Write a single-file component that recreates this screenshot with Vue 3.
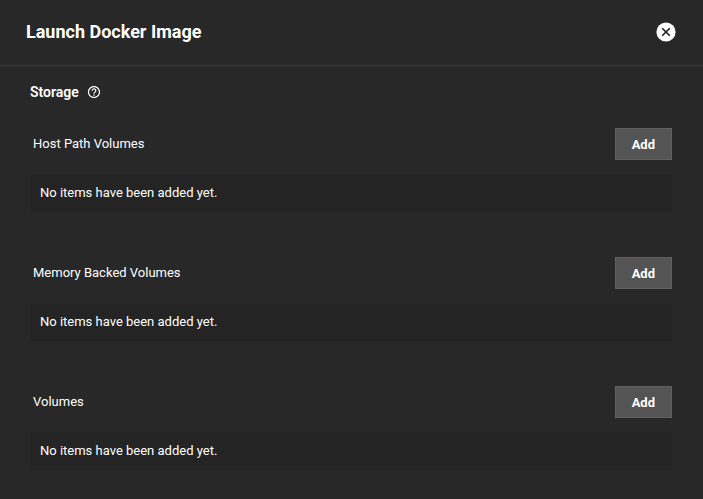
<script setup>
import { ref } from 'vue'

const groups = ref([
  { id: 'host-path', label: 'Host Path Volumes' },
  { id: 'memory-backed', label: 'Memory Backed Volumes' },
  { id: 'volumes', label: 'Volumes' },
])
</script>

<template>
  <main class="panel">
    <header class="panel-header">
      <h1 class="title">Launch Docker Image</h1>
      <button class="icon-button" type="button" aria-label="Close">
        <svg width="20" height="20" viewBox="0 0 20 20" aria-hidden="true">
          <circle cx="10" cy="10" r="9.6" fill="#fff" />
          <path d="M6.200 6.200L13.800 13.800M13.800 6.200L6.200 13.800" stroke="#202020" stroke-width="1.6" fill="none" />
        </svg>
      </button>
    </header>

    <section class="storage">
      <div class="storage-heading">
        <h2 class="heading">Storage</h2>
        <button class="icon-button" type="button" aria-label="Storage help">
          <svg width="14" height="14" viewBox="0.500 0.500 23 23" fill="#fff" aria-hidden="true">
            <path d="M11 18h2v-2h-2v2zm1-16C6.48 2 2 6.48 2 12s4.480 10 10 10 10-4.480 10-10S17.520 2 12 2zm0 18c-4.410 0-8-3.590-8-8s3.590-8 8-8 8 3.590 8 8-3.590 8-8 8zm0-14c-2.210 0-4 1.790-4 4h2c0-1.100.900-2 2-2s2 .900 2 2c0 2-3 1.750-3 5h2c0-2.250 3-2.500 3-5 0-2.210-1.790-4-4-4z" />
          </svg>
        </button>
      </div>

      <div class="groups">
        <section v-for="group in groups" :key="group.id" class="group">
          <div class="group-header">
            <h3 :id="group.id" class="group-label">{{ group.label }}</h3>
            <button class="add" type="button" :aria-describedby="group.id">Add</button>
          </div>
          <p class="empty">No items have been added yet.</p>
        </section>
      </div>
    </section>
  </main>
</template>

<style>
body {
  margin: 0;
  background: #282828;
}
</style>

<style scoped>
.panel {
  color: #fff;
  font-family: Roboto, "Liberation Sans", sans-serif;
  font-size: 13px;
}

.panel-header {
  display: flex;
  align-items: center;
  justify-content: space-between;
  padding: 16px 27px 17px 26px;
  border-bottom: 1px solid #3c3c3c;
}

.title {
  margin: 0;
  font-size: 18px;
  font-weight: 700;
  line-height: 32px;
}

.icon-button {
  display: flex;
  padding: 0;
  border: 0;
  background: none;
  cursor: pointer;
}

.storage {
  padding: 16px 31px 28px 30px;
}

.storage-heading {
  display: flex;
  align-items: center;
  gap: 8px;
}

.heading {
  margin: 0;
  font-size: 14px;
  font-weight: 600;
  line-height: 20px;
}

.groups {
  display: grid;
  gap: 45px;
  margin-top: 26px;
}

.group-header {
  display: flex;
  align-items: center;
  justify-content: space-between;
  padding-left: 3px;
}

.group-label {
  margin: 0;
  font-size: 13px;
  font-weight: 400;
  line-height: 30px;
}

.add {
  box-sizing: border-box;
  height: 32px;
  padding: 2px 16px 0;
  border: 1px solid #606060;
  background: #545454;
  color: #fff;
  font-family: inherit;
  font-size: 13px;
  font-weight: 700;
  line-height: 28px;
  cursor: pointer;
}

.empty {
  margin: 14px 0 0;
  padding: 9px 10px;
  background: #242424;
  line-height: 20px;
}
</style>
